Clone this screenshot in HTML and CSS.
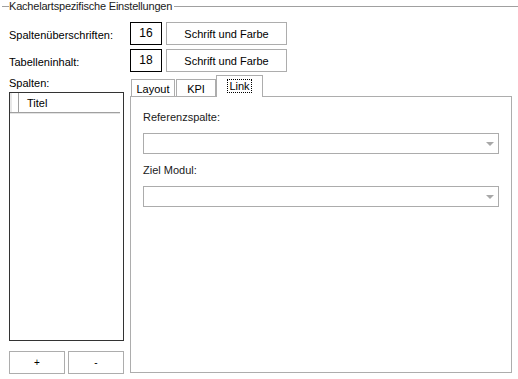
FILE: index.html
```html
<!DOCTYPE html>
<html lang="de">
<head>
<meta charset="utf-8">
<title>Kachelartspezifische Einstellungen</title>
<link rel="stylesheet" href="styles.css">
</head>
<body>
<div class="group">
  <div class="legend">
    <span class="rule lead"></span>
    <span class="legend-text">Kachelartspezifische Einstellungen</span>
    <span class="rule fill"></span>
  </div>

  <div class="font-row first-row">
    <span class="row-label">Spaltenüberschriften:</span>
    <span class="size-box">16</span>
    <button class="btn font-btn">Schrift und Farbe</button>
  </div>
  <div class="font-row">
    <span class="row-label">Tabelleninhalt:</span>
    <span class="size-box">18</span>
    <button class="btn font-btn">Schrift und Farbe</button>
  </div>

  <div class="main">
    <div class="columns">
      <div class="col-label">Spalten:</div>
      <div class="listbox">
        <div class="lb-header">
          <span class="lb-rowhead"></span>
          <span class="lb-col">Titel</span>
        </div>
      </div>
      <div class="lb-buttons">
        <button class="btn small-btn">+</button>
        <button class="btn small-btn">-</button>
      </div>
    </div>

    <div class="tabs">
      <div class="tab-strip">
        <div class="tab tab-layout">Layout</div>
        <div class="tab tab-kpi">KPI</div>
        <div class="tab tab-active"><span class="focus">Link</span></div>
      </div>
      <div class="tab-panel">
        <div class="field-label first">Referenzspalte:</div>
        <div class="combo"><span class="arrow"></span></div>
        <div class="field-label">Ziel Modul:</div>
        <div class="combo"><span class="arrow"></span></div>
      </div>
    </div>
  </div>
</div>
</body>
</html>
```

FILE: styles.css
```css
* {
  box-sizing: border-box;
}

html, body {
  margin: 0;
  padding: 0;
  background: #ffffff;
}

body {
  font-family: "Liberation Sans", Arial, sans-serif;
  font-size: 11px;
  line-height: 13px;
  color: #000000;
  width: 518px;
  height: 379px;
  overflow: hidden;
}

/* group box header */
.legend {
  display: flex;
  align-items: center;
  height: 13px;
}

.rule {
  height: 1px;
  background: #a0a0a0;
}

.lead {
  width: 7px;
  margin-left: 2px;
}

.legend-text {
  padding: 0 2px 0 0;
  white-space: nowrap;
  letter-spacing: -0.2px;
  color: #1a1a1a;
}

.fill {
  flex: 1;
}

/* font rows */
.font-row {
  display: flex;
  align-items: center;
  height: 23px;
  margin-top: 4px;
}

.font-row.first-row {
  margin-top: 9px;
}

.row-label {
  flex: none;
  width: 130px;
  padding-left: 9px;
  padding-top: 4px;
  white-space: nowrap;
}

.size-box {
  width: 32px;
  height: 23px;
  border: 1px solid #000000;
  display: flex;
  align-items: center;
  justify-content: center;
  font-size: 12px;
}

.btn {
  font-family: "Liberation Sans", Arial, sans-serif;
  font-size: 11px;
  color: #000000;
  background: #ffffff;
  border: 1px solid #adadad;
  padding: 0;
  margin: 0;
}

.font-btn {
  width: 121px;
  height: 23px;
  margin-left: 4px;
}

/* main area */
.main {
  display: flex;
  margin-top: 3px;
}

.columns {
  width: 115px;
  margin-left: 9px;
  display: flex;
  flex-direction: column;
}

.col-label {
  height: 16px;
  padding-top: 2px;
  line-height: 13px;
}

.listbox {
  margin-top: 1px;
  height: 249px;
  border: 1px solid #333333;
  padding: 0 3px 0 0;
}

.lb-header {
  display: flex;
  height: 20px;
  border-bottom: 1px solid #a0a0a0;
  box-shadow: 0 1px 0 #e3e3e3;
}

.lb-rowhead {
  width: 9px;
  border-left: 2px solid #e8e8e8;
  border-right: 1px solid #a0a0a0;
}

.lb-col {
  flex: 1;
  padding-left: 8px;
  padding-top: 1px;
  line-height: 19px;
}

.lb-buttons {
  display: flex;
  gap: 3px;
  margin-top: 10px;
}

.small-btn {
  width: 56px;
  height: 23px;
  font-size: 10px;
}

/* tab control */
.tabs {
  margin-left: 6px;
  width: 382px;
  display: flex;
  flex-direction: column;
}

.tab-strip {
  display: flex;
  align-items: flex-end;
  height: 21px;
}

.tab {
  height: 17px;
  border: 1px solid #adadad;
  border-bottom: none;
  background: #ffffff;
  display: flex;
  align-items: center;
  justify-content: center;
  padding-top: 2px;
}

.tab-layout {
  width: 44px;
  margin-left: 1px;
}

.tab-kpi {
  width: 40px;
  margin-left: 1px;
}

.tab-active {
  width: 47px;
  height: 22px;
  margin-bottom: -1px;
  position: relative;
  z-index: 1;
  align-items: flex-start;
  padding-top: 4px;
}

.focus {
  outline: 1px dotted #000000;
  outline-offset: 0;
  padding: 0 1px;
  line-height: 12px;
}

.tab-panel {
  height: 277px;
  border: 1px solid #adadad;
  padding: 0 12px;
}

.field-label {
  margin-top: 10px;
  height: 13px;
  color: #1a1a1a;
}

.field-label.first {
  margin-top: 14px;
}

.combo {
  margin-top: 9px;
  height: 21px;
  border: 1px solid #acacac;
  display: flex;
  align-items: center;
  justify-content: flex-end;
  padding-right: 4px;
}

.arrow {
  width: 0;
  height: 0;
  border-left: 4px solid transparent;
  border-right: 4px solid transparent;
  border-top: 4px solid #a8a8a8;
}
```
